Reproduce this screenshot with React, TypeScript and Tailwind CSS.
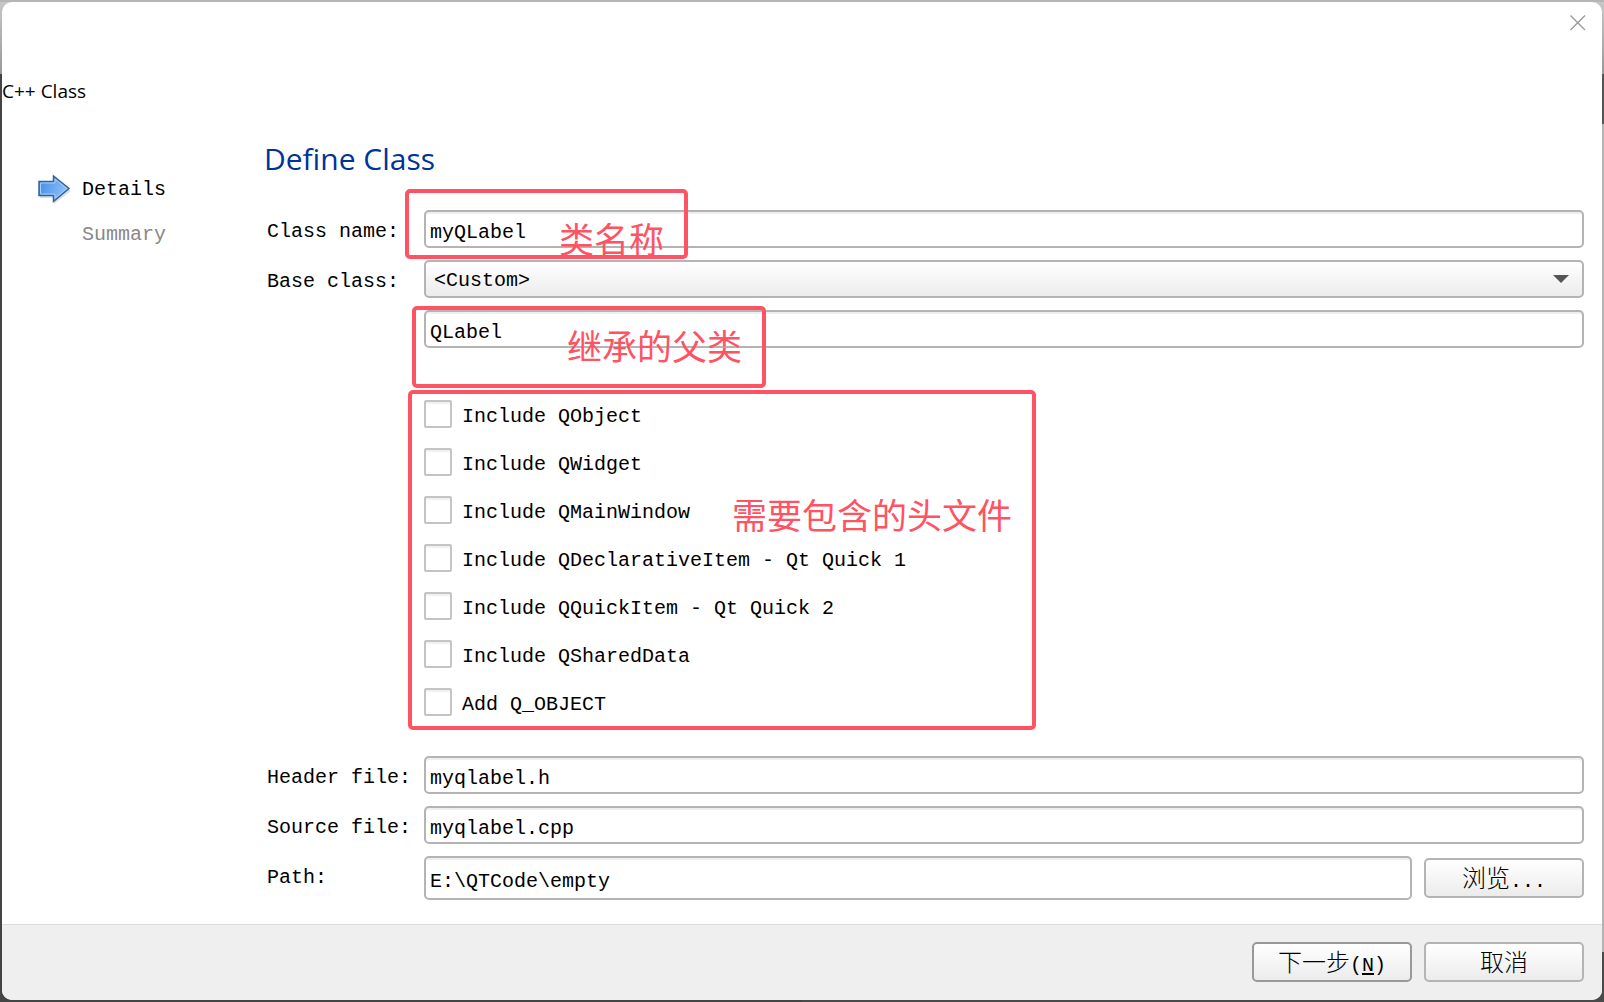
import { useState } from "react";
import type { InputHTMLAttributes } from "react";
import clsx from "clsx";

const includes = [
  "Include QObject",
  "Include QWidget",
  "Include QMainWindow",
  "Include QDeclarativeItem - Qt Quick 1",
  "Include QQuickItem - Qt Quick 2",
  "Include QSharedData",
  "Add Q_OBJECT",
];

const TextField = ({
  className,
  ...props
}: InputHTMLAttributes<HTMLInputElement>) => {
  return (
    <input
      type="text"
      className={clsx(
        "block w-full min-w-0 rounded-[5px] border-2 border-[#b4b4b4] bg-white px-1 pt-1.5 shadow-[inset_0_2px_0_#efefef] outline-none",
        className ?? "h-[38px]"
      )}
      {...props}
    />
  );
};

const Note = ({ text, className }: { text: string; className: string }) => {
  return (
    <div
      className={clsx(
        "pointer-events-none absolute z-10 flex justify-end rounded-[5px] border-4 border-[#ff5263] pr-5 text-[35px] leading-[35px] whitespace-nowrap text-[#ff5263] font-['Noto_Sans_CJK_SC',sans-serif]",
        className
      )}
    >
      {text}
    </div>
  );
};

const buttonStyles =
  "h-10 w-40 shrink-0 rounded-[5px] border-2 bg-linear-to-b from-white to-[#ececec] pt-1.5 text-[24px] leading-6 font-light";

const StepArrow = () => {
  return (
    <svg width="34" height="32" viewBox="0 0 34 32" aria-hidden="true">
      <defs>
        <linearGradient id="arrow" x1="0" y1="0" x2="1" y2="0.3">
          <stop offset="0" stopColor="#3f8ae6" />
          <stop offset="1" stopColor="#8fc0fa" />
        </linearGradient>
      </defs>
      <path
        d="M2 10H16V4L33 17L16 30V24H2Z"
        fill="#000"
        opacity="0.13"
      />
      <path
        d="M1 7.500H15.500V2L31 14.500L15.500 27.500V21.500H1Z"
        fill="url(#arrow)"
        stroke="#34629c"
        strokeWidth="1.500"
      />
      <path
        d="M2.500 9H17V5L28.800 14.500L17 24.300V20H2.500Z"
        fill="none"
        stroke="#a6cdfb"
        strokeWidth="1"
      />
    </svg>
  );
};

const App = () => {
  const [className, setClassName] = useState("myQLabel");
  const [baseClass, setBaseClass] = useState("QLabel");

  return (
    <div className="flex min-h-screen p-0.5 [background:linear-gradient(#b5b5b5_0_2px,transparent_2px),linear-gradient(#c8c8c8,#999_74px,#444_74px)_left/50%_100%_no-repeat,linear-gradient(#c8c8c8,#999_74px,#555_74px,#555_124px,#b4b4b4_124px,#b4b4b4_calc(100%-50px),#4a4a4a_calc(100%-50px))_right/50%_100%_no-repeat,#4a4a4a] font-['Liberation_Mono','Noto_Sans_CJK_SC',monospace] text-[20px] leading-7 text-black">
      <div className="flex flex-1 flex-col overflow-hidden rounded-[10px] bg-white">
        <header>
          <div className="flex h-[75px] justify-end px-3.5 pt-3">
            <button type="button" aria-label="Close" className="h-5 w-5">
              <svg width="20" height="20" viewBox="0 0 20 20">
                <path
                  d="M2.500 1.500L17 16M17 1.500L2.500 16"
                  stroke="#999"
                  strokeWidth="1.300"
                />
              </svg>
            </button>
          </div>
          <p className="text-[19px] font-['Open_Sans',sans-serif]">C++ Class</p>
        </header>

        <div className="flex flex-1 pb-6">
          <ol className="w-[262px] shrink-0 space-y-[15px] pt-[69px] pl-9">
            <li className="flex items-center gap-2.5">
              <StepArrow />
              Details
            </li>
            <li className="pl-11 text-[#888]">Summary</li>
          </ol>

          <main className="min-w-0 flex-1 pt-[34px] pr-[18px]">
            <h1 className="text-[30px] leading-10 text-[#003399] font-['Open_Sans',sans-serif]">
              Define Class
            </h1>

            <form
              id="define-class"
              className="mt-[31px] grid grid-cols-[157px_1fr] gap-y-3 pl-[3px]"
              onSubmit={(e) => e.preventDefault()}
            >
              <label htmlFor="class-name" className="pt-2">
                Class name:
              </label>
              <div className="relative">
                <TextField
                  id="class-name"
                  value={className}
                  onChange={(e) => setClassName(e.target.value)}
                />
                <Note
                  text="类名称"
                  className="-top-[21px] -left-[19px] h-[70px] w-[283px] items-end"
                />
              </div>

              <label htmlFor="base-class" className="pt-2">
                Base class:
              </label>
              <div className="relative">
                <select
                  id="base-class"
                  className="block h-[38px] w-full appearance-none rounded-[5px] border-2 border-[#b4b4b4] bg-linear-to-b from-white to-[#ececec] px-2 pt-1 outline-none"
                >
                  <option>&lt;Custom&gt;</option>
                </select>
                <svg
                  width="16"
                  height="8"
                  viewBox="0 0 16 8"
                  className="pointer-events-none absolute top-[15px] right-[15px]"
                >
                  <path d="M0 0H16L8 8Z" fill="#555" />
                </svg>
              </div>

              <div className="relative col-start-2">
                <TextField
                  aria-label="Base class name"
                  value={baseClass}
                  onChange={(e) => setBaseClass(e.target.value)}
                />
                <Note
                  text="继承的父类"
                  className="-top-1 -left-3 h-[82px] w-[354px] items-center pb-1.5"
                />
              </div>

              <div className="relative col-start-2 mt-10 mb-7 flex flex-col gap-5">
                {includes.map((item) => (
                  <label key={item} className="flex h-7 items-center gap-2.5">
                    <input
                      type="checkbox"
                      className="h-7 w-7 appearance-none rounded-[2px] border-2 border-[#c4c4c4] bg-white shadow-[inset_0_2px_1px_#f0f0f0] checked:bg-[#5a9bea]"
                    />
                    <span className="pt-1.5">{item}</span>
                  </label>
                ))}
                <Note
                  text="需要包含的头文件"
                  className="-top-2.5 -left-4 h-[340px] w-[628px] items-start pt-[102px]"
                />
              </div>

              <label htmlFor="header-file" className="pt-2">
                Header file:
              </label>
              <TextField id="header-file" defaultValue="myqlabel.h" />

              <label htmlFor="source-file" className="pt-2">
                Source file:
              </label>
              <TextField id="source-file" defaultValue="myqlabel.cpp" />

              <label htmlFor="path" className="pt-2">
                Path:
              </label>
              <div className="flex items-center gap-3">
                <TextField
                  id="path"
                  className="h-11"
                  defaultValue="E:\QTCode\empty"
                />
                <button
                  type="button"
                  className={clsx(buttonStyles, "border-[#b4b4b4]")}
                >
                  浏览<span className="text-[20px]">...</span>
                </button>
              </div>
            </form>
          </main>
        </div>

        <footer className="flex justify-end gap-3 border-t border-[#dcdcdc] bg-[#efefef] pt-[17px] pr-[18px] pb-[18px]">
          <button
            type="submit"
            form="define-class"
            className={clsx(buttonStyles, "border-[#999]")}
          >
            下一步
            <span className="text-[20px]">
              (<u className="underline-offset-2">N</u>)
            </span>
          </button>
          <button
            type="button"
            className={clsx(buttonStyles, "border-[#b4b4b4]")}
          >
            取消
          </button>
        </footer>
      </div>
    </div>
  );
};

export default App;
